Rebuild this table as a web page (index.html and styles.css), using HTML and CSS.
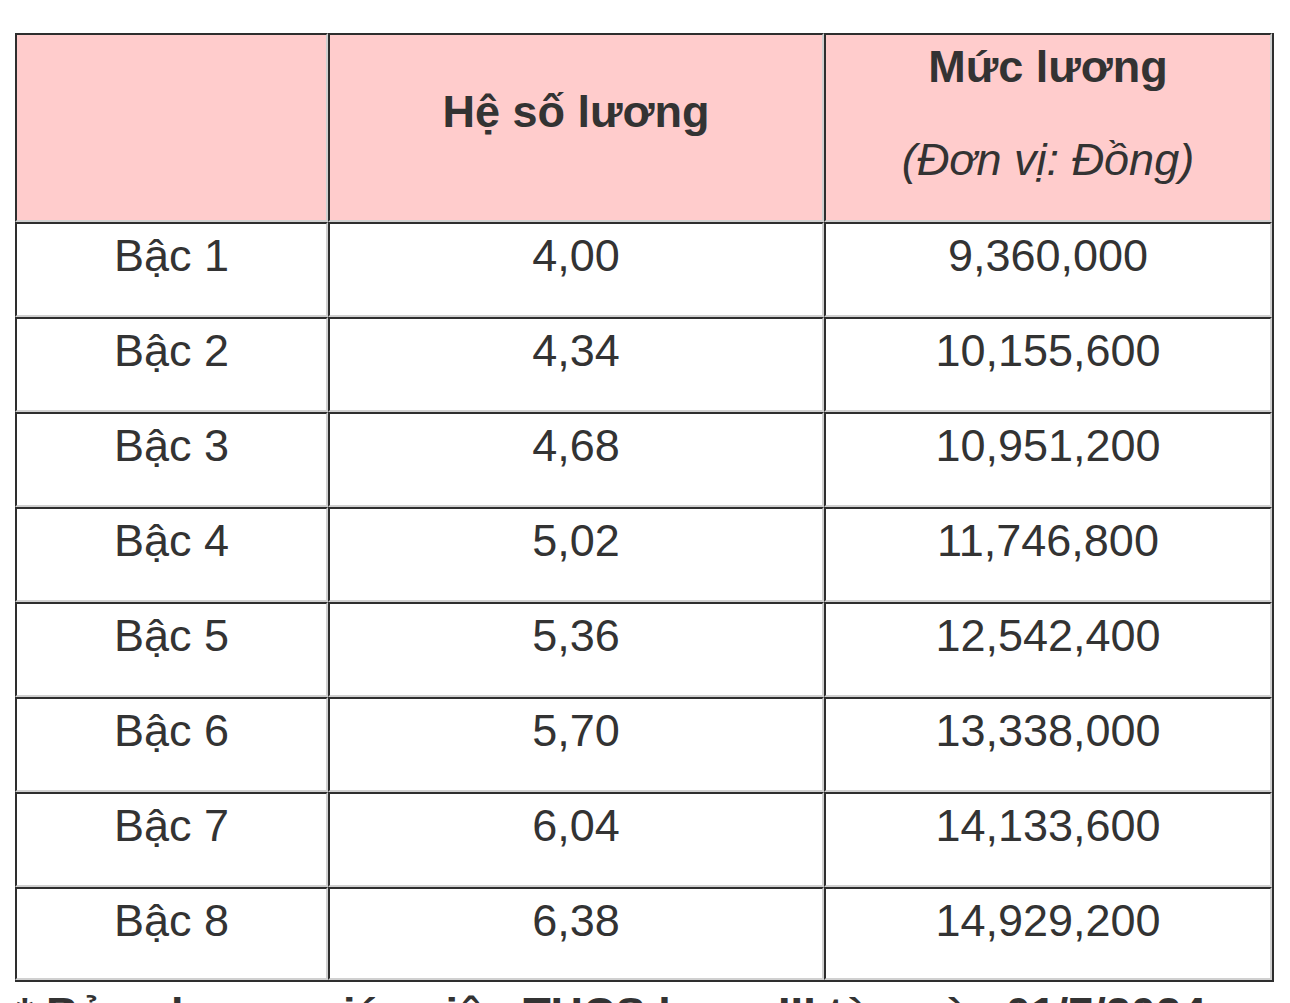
FILE: index.html
```html
<!DOCTYPE html>
<html lang="vi">
<head>
<meta charset="utf-8">
<title>Bảng lương</title>
<link rel="stylesheet" href="styles.css">
</head>
<body>
<table class="salary">
  <thead>
    <tr>
      <th class="col1"></th>
      <th class="col2"><p class="h-single">Hệ số lương</p></th>
      <th class="col3"><p class="h-title">Mức lương</p><p class="h-unit">(Đơn vị: Đồng)</p></th>
    </tr>
  </thead>
  <tbody>
    <tr><td>Bậc 1</td><td>4,00</td><td>9,360,000</td></tr>
    <tr><td>Bậc 2</td><td>4,34</td><td>10,155,600</td></tr>
    <tr><td>Bậc 3</td><td>4,68</td><td>10,951,200</td></tr>
    <tr><td>Bậc 4</td><td>5,02</td><td>11,746,800</td></tr>
    <tr><td>Bậc 5</td><td>5,36</td><td>12,542,400</td></tr>
    <tr><td>Bậc 6</td><td>5,70</td><td>13,338,000</td></tr>
    <tr><td>Bậc 7</td><td>6,04</td><td>14,133,600</td></tr>
    <tr class="last"><td>Bậc 8</td><td>6,38</td><td>14,929,200</td></tr>
  </tbody>
</table>
<p class="note">* Bảng lương giáo viên THCS hạng III từ ngày 01/7/2024</p>
</body>
</html>
```

FILE: styles.css
```css
html, body {
  margin: 0;
  padding: 0;
  background: #ffffff;
}

body {
  font-family: "Liberation Sans", Arial, Helvetica, sans-serif;
  font-size: 45px;
  line-height: 52px;
  color: #333333;
}

.salary {
  margin: 33px 0 0 15px;
  width: 1259px;
  table-layout: fixed;
  border-collapse: separate;
  border-spacing: 0;
  border-right: 2px solid #2e2e2e;
  border-bottom: 2px solid #2e2e2e;
}

.salary th,
.salary td {
  box-sizing: border-box;
  border-top: 2px solid #2e2e2e;
  border-left: 2px solid #2e2e2e;
  border-right: 2px solid #d0d0d0;
  border-bottom: 2px solid #d0d0d0;
  padding: 6px 0 0 0;
  vertical-align: top;
  text-align: center;
  font-weight: normal;
}

.salary th {
  height: 189px;
  background: #ffcccc;
}

.salary td {
  height: 95px;
}

.salary tr.last td {
  height: 93px;
}

.col1 { width: 313px; }
.col2 { width: 496px; }
.col3 { width: 448px; }

.salary p {
  margin: 0;
}

.h-single,
.h-title {
  font-weight: bold;
}

.salary th.col2 {
  padding-top: 51px;
}

.h-unit {
  font-style: italic;
}

.salary p.h-unit {
  margin-top: 41px;
}

.note {
  margin: 6px 0 0 16px;
  font-weight: bold;
  white-space: nowrap;
}
```
